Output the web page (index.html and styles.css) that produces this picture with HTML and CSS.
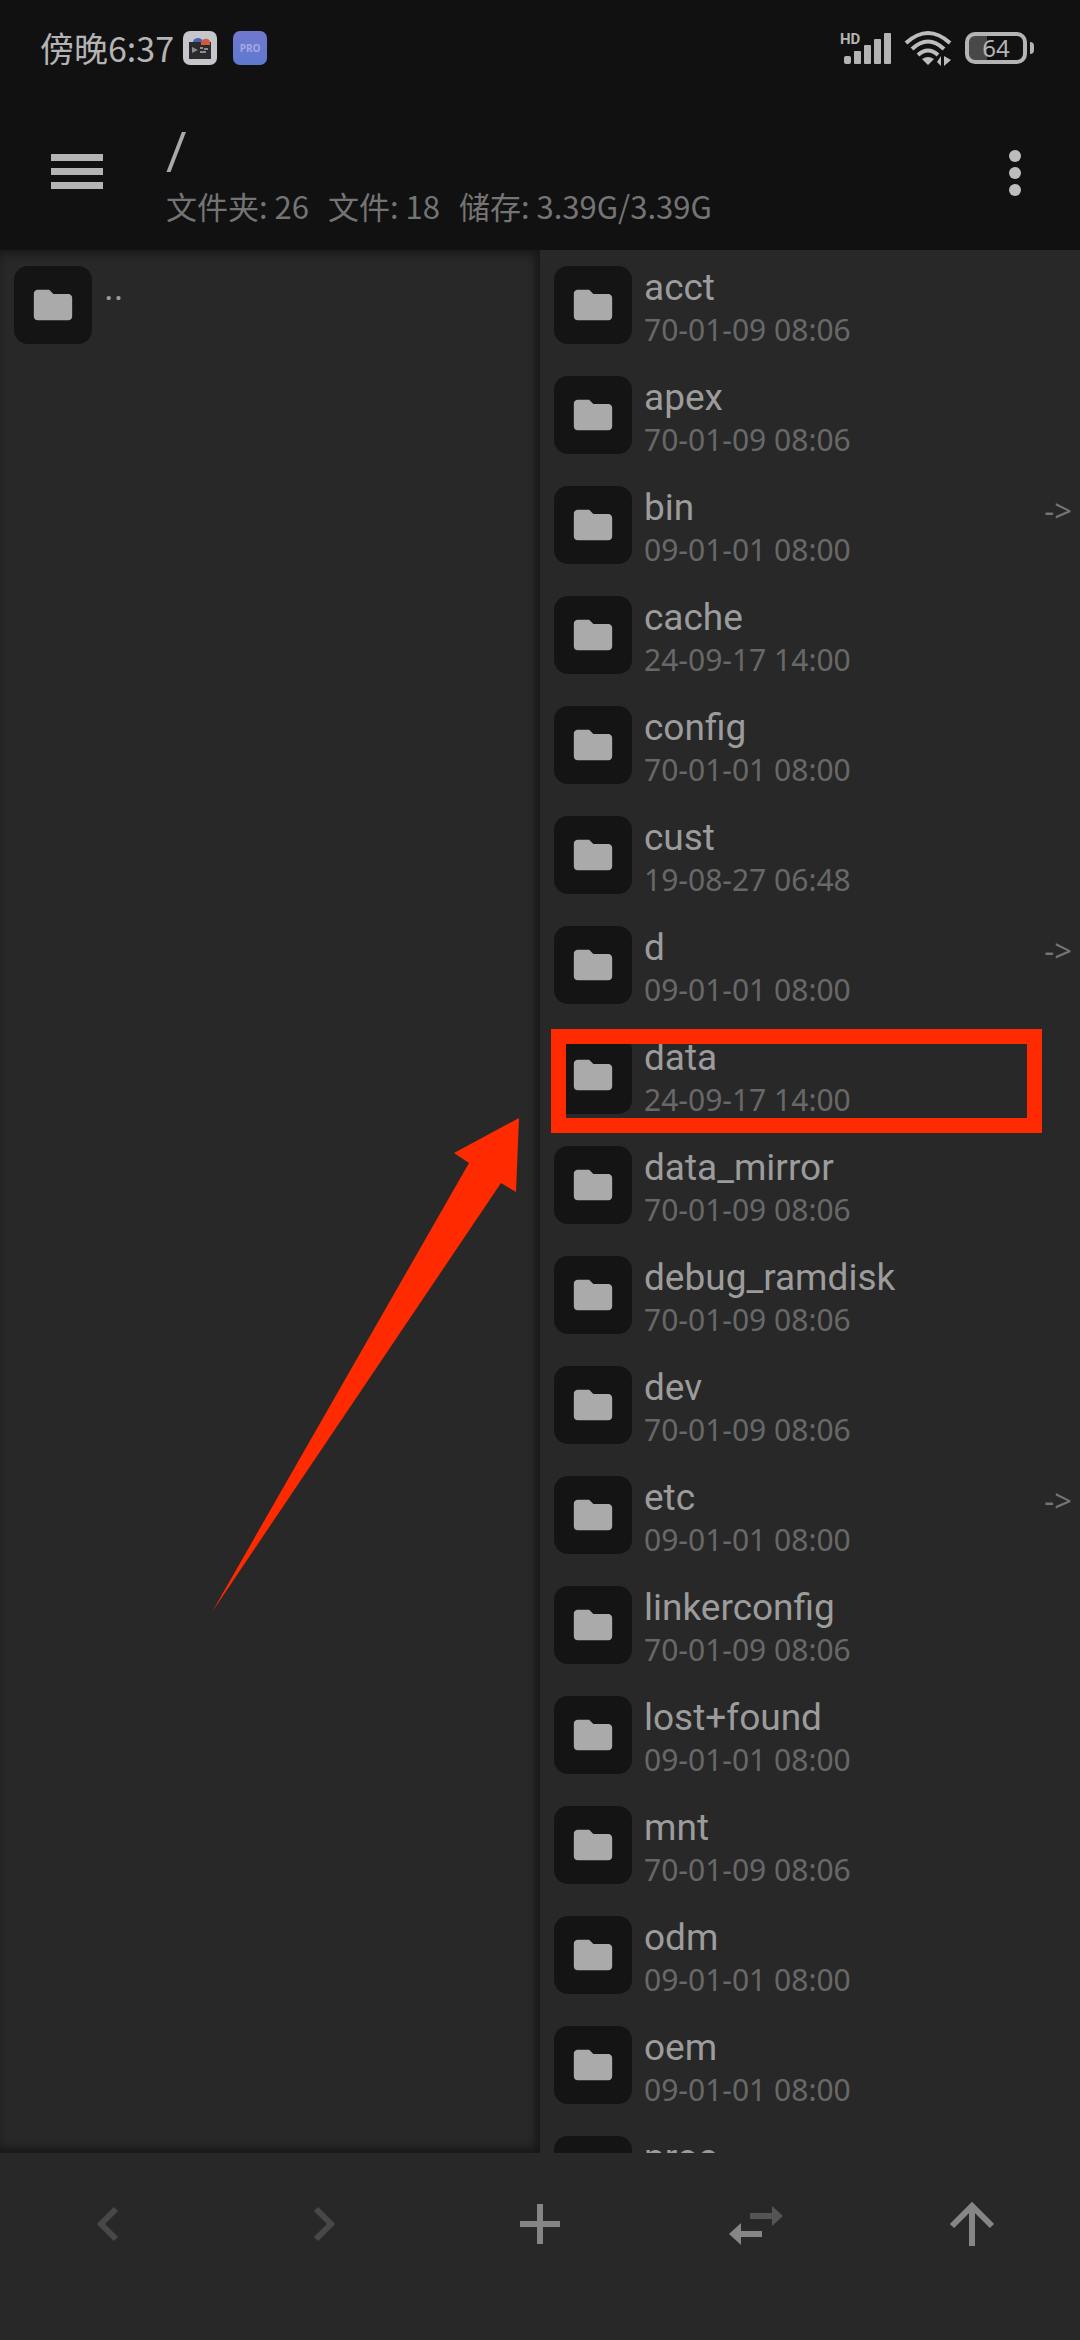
FILE: index.html
```html
<!DOCTYPE html>
<html lang="zh-CN">
<head>
<meta charset="utf-8">
<meta name="viewport" content="width=device-width, initial-scale=1">
<title>文件管理</title>
<link rel="stylesheet" href="styles.css">
</head>
<body>
<svg class="defs" aria-hidden="true">
  <symbol id="folder" viewBox="0 0 24 24"><path d="M10 4H4c-1.100 0-2 .9-2 2v12c0 1.100.9 2 2 2h16c1.100 0 2-.9 2-2V8.200c0-1.100-.9-2-2-2h-7.800z"/></symbol>
</svg>
<div class="app">
  <header class="header">
    <div class="status">
      <div class="status-side">
        <span class="clock">傍晚6:37</span>
        <svg class="notice" viewBox="0 0 34 34" aria-hidden="true">
          <rect width="34" height="34" rx="7" fill="#c4c6ca"/>
          <path d="M6 11h22v17H6z" fill="#2b2b2d"/>
          <path d="M10 11a5 4 0 0 1 10 0z" fill="#4a62b4"/>
          <path d="M18 14a5 5 0 0 1 9-4v4z" fill="#cf5a3c"/>
          <path d="M9 16l6 3-6 3zM17 16h3v2h-3zM21 17h4v2h-4zM17 20h6v2h-6z" fill="#8d8d8f"/>
        </svg>
        <span class="badge">PRO</span>
      </div>
      <div class="status-side">
        <svg class="signal" viewBox="0 0 56 36" aria-hidden="true">
          <text x="0" y="14" class="hd">HD</text>
          <rect x="4" y="26" width="7" height="8" rx="2"/><rect x="14" y="21" width="7" height="13" rx="1"/><rect x="24" y="15" width="7" height="19" rx="1"/><rect x="34" y="9" width="7" height="25" rx="1"/><rect x="44" y="3" width="7" height="31" rx="1"/>
        </svg>
        <svg class="wifi" viewBox="0 0 48 36" aria-hidden="true">
          <g fill="none" stroke="#bdbdbd" stroke-width="4"><path d="M2 13Q24-7 46 13"/><path d="M8 19Q24 4 40 19"/><path d="M14 25Q24 16 34 25"/></g>
          <path d="M18 29q6-4 12 0l-6 6zM37 26v10l-4-4zM40 26v10l7-6z"/>
        </svg>
        <span class="battery"><span class="level">64</span></span>
      </div>
    </div>
    <div class="bar">
      <button class="icon-btn" aria-label="菜单"><svg class="menu" viewBox="0 0 52 36"><path d="M0 0h52v7H0zM0 14h52v7H0zM0 28h52v7H0z"/></svg></button>
      <div class="heading">
        <h1>/</h1>
        <p><span>文件夹: 26</span><span>文件: 18</span><span>储存: 3.39G/3.39G</span></p>
      </div>
      <button class="icon-btn more-btn" aria-label="更多"><svg class="more" viewBox="0 0 12 46"><circle cx="6" cy="6" r="6"/><circle cx="6" cy="23" r="6"/><circle cx="6" cy="40" r="6"/></svg></button>
    </div>
  </header>
  <main class="panes">
    <section class="pane pane-left" aria-label="左侧窗口">
      <ul class="list">
        <li><button class="row"><span class="tile"><svg><use href="#folder"/></svg></span><span class="info"><span class="name">..</span></span></button></li>
      </ul>
      <svg class="pointer" viewBox="0 0 308 494" aria-hidden="true"><path d="M307 0L242 35l15 10L0 494 289 65l15 9z"/></svg>
    </section>
    <section class="pane pane-right" aria-label="右侧窗口">
      <ul class="list">
        <li><button class="row"><span class="tile"><svg><use href="#folder"/></svg></span><span class="info"><span class="name">acct</span><span class="date">70-01-09 08:06</span></span></button></li>
        <li><button class="row"><span class="tile"><svg><use href="#folder"/></svg></span><span class="info"><span class="name">apex</span><span class="date">70-01-09 08:06</span></span></button></li>
        <li><button class="row"><span class="tile"><svg><use href="#folder"/></svg></span><span class="info"><span class="name">bin</span><span class="date">09-01-01 08:00</span></span><span class="link">-&gt;</span></button></li>
        <li><button class="row"><span class="tile"><svg><use href="#folder"/></svg></span><span class="info"><span class="name">cache</span><span class="date">24-09-17 14:00</span></span></button></li>
        <li><button class="row"><span class="tile"><svg><use href="#folder"/></svg></span><span class="info"><span class="name">config</span><span class="date">70-01-01 08:00</span></span></button></li>
        <li><button class="row"><span class="tile"><svg><use href="#folder"/></svg></span><span class="info"><span class="name">cust</span><span class="date">19-08-27 06:48</span></span></button></li>
        <li><button class="row"><span class="tile"><svg><use href="#folder"/></svg></span><span class="info"><span class="name">d</span><span class="date">09-01-01 08:00</span></span><span class="link">-&gt;</span></button></li>
        <li class="marked"><button class="row"><span class="tile"><svg><use href="#folder"/></svg></span><span class="info"><span class="name">data</span><span class="date">24-09-17 14:00</span></span></button></li>
        <li><button class="row"><span class="tile"><svg><use href="#folder"/></svg></span><span class="info"><span class="name">data_mirror</span><span class="date">70-01-09 08:06</span></span></button></li>
        <li><button class="row"><span class="tile"><svg><use href="#folder"/></svg></span><span class="info"><span class="name">debug_ramdisk</span><span class="date">70-01-09 08:06</span></span></button></li>
        <li><button class="row"><span class="tile"><svg><use href="#folder"/></svg></span><span class="info"><span class="name">dev</span><span class="date">70-01-09 08:06</span></span></button></li>
        <li><button class="row"><span class="tile"><svg><use href="#folder"/></svg></span><span class="info"><span class="name">etc</span><span class="date">09-01-01 08:00</span></span><span class="link">-&gt;</span></button></li>
        <li><button class="row"><span class="tile"><svg><use href="#folder"/></svg></span><span class="info"><span class="name">linkerconfig</span><span class="date">70-01-09 08:06</span></span></button></li>
        <li><button class="row"><span class="tile"><svg><use href="#folder"/></svg></span><span class="info"><span class="name">lost+found</span><span class="date">09-01-01 08:00</span></span></button></li>
        <li><button class="row"><span class="tile"><svg><use href="#folder"/></svg></span><span class="info"><span class="name">mnt</span><span class="date">70-01-09 08:06</span></span></button></li>
        <li><button class="row"><span class="tile"><svg><use href="#folder"/></svg></span><span class="info"><span class="name">odm</span><span class="date">09-01-01 08:00</span></span></button></li>
        <li><button class="row"><span class="tile"><svg><use href="#folder"/></svg></span><span class="info"><span class="name">oem</span><span class="date">09-01-01 08:00</span></span></button></li>
        <li><button class="row"><span class="tile"><svg><use href="#folder"/></svg></span><span class="info"><span class="name">proc</span></span></button></li>
      </ul>
    </section>
  </main>
  <nav class="toolbar" aria-label="操作">
    <button aria-label="后退" disabled><svg viewBox="0 0 60 60"><path d="M38 15L23 30l15 15"/></svg></button>
    <button aria-label="前进" disabled><svg viewBox="0 0 60 60"><path d="M22 15l15 15-15 15"/></svg></button>
    <button aria-label="新建"><svg viewBox="0 0 60 60"><path d="M30 10v40M10 30h40"/></svg></button>
    <button aria-label="交换窗口"><svg viewBox="0 0 60 60"><path class="dim" d="M24 22h26"/><path class="dim-fill" d="M46 12l11 10-11 10z"/><path d="M11 40h25"/><path class="fill" d="M15 29v22L3 40z"/></svg></button>
    <button aria-label="上级目录"><svg viewBox="0 0 60 60"><path d="M30 52V11M10 32l20-20 20 20"/></svg></button>
  </nav>
</div>
</body>
</html>
```
FILE: styles.css
```css
* { box-sizing: border-box; }
body {
  margin: 0;
  background: #282828;
  color: #9c9c9c;
  font-family: "Noto Sans", "Noto Sans CJK SC", sans-serif;
}
button {
  border: 0;
  padding: 0;
  background: none;
  color: inherit;
  font: inherit;
}
svg { display: block; flex: none; }
.defs { display: none; }
.app { display: flex; flex-direction: column; height: 100vh; }

.header { flex: none; background: #111; }
.status {
  display: flex;
  justify-content: space-between;
  height: 96px;
  padding: 0 46px 0 40px;
}
.status-side { display: flex; align-items: center; }
.clock {
  color: #b4b4b4;
  font: 400 34px/96px "Noto Sans CJK SC", sans-serif;
}
.notice { width: 34px; height: 34px; margin: 0 16px 0 9px; }
.badge {
  width: 34px;
  border-radius: 7px;
  background: linear-gradient(#7277cf, #5c7ace);
  color: #a4a9e2;
  font: 700 10px/34px "Noto Sans", sans-serif;
  text-align: center;
}
.signal { width: 56px; height: 36px; margin-right: 8px; fill: #b4b4b4; overflow: visible; }
.hd { font: 700 15px Roboto, sans-serif; }
.wifi { width: 48px; height: 36px; margin-right: 13px; fill: #bdbdbd; }
.battery {
  display: flex;
  align-items: center;
}
.battery::after {
  content: "";
  width: 4px;
  height: 12px;
  margin-left: 3px;
  border-radius: 0 4px 4px 0;
  background: #b4b4b4;
}
.level {
  width: 62px;
  border: 4px solid #b4b4b4;
  border-radius: 10px;
  background: linear-gradient(90deg, #484848 34%, #111 34%);
  color: #b4b4b4;
  font: 400 24px/24px "Noto Sans", sans-serif;
  text-align: center;
}

.bar { display: flex; align-items: flex-start; height: 154px; padding-top: 34px; }
.icon-btn { display: flex; justify-content: center; width: 154px; padding-top: 24px; }
.menu { width: 52px; height: 36px; fill: #b4b4b4; }
.more-btn { width: 130px; padding-top: 20px; }
.more { width: 12px; height: 46px; fill: #bdbdbd; }
.heading { flex: 1; padding-left: 12px; }
.heading h1 { margin: 0; color: #aaa; font: 400 52px/44px Roboto, sans-serif; }
.heading p {
  display: flex;
  gap: 19px;
  margin: 12px 0 0;
  color: #747474;
  font: 400 31px/40px "Noto Sans CJK SC", sans-serif;
}

.panes { flex: 1; display: grid; grid-template-columns: 1fr 1fr; min-height: 0; }
.pane { position: relative; overflow: hidden; }
.pane-left { box-shadow: inset -8px 0 8px -4px #181818, inset 0 -8px 8px -4px #181818, inset 0 8px 8px -4px #1c1c1c; }
.list { margin: 0; padding: 0; list-style: none; }
.list li { position: relative; }
.row {
  display: flex;
  align-items: flex-start;
  gap: 12px;
  width: 100%;
  height: 110px;
  padding: 16px 8px 0 14px;
  text-align: left;
}
.tile {
  display: grid;
  place-items: center;
  flex: none;
  width: 78px;
  height: 78px;
  border-radius: 14px;
  background: #141414;
}
.tile svg { width: 46px; height: 46px; fill: #aaa; }
.info { flex: 1; display: flex; flex-direction: column; }
.name { font: 400 37px/44px Roboto, sans-serif; }
.date { color: #686868; font-size: 30px; line-height: 40px; }
.link { color: #747474; font-size: 31px; line-height: 48px; }
.marked::after {
  content: "";
  position: absolute;
  inset: 9px 38px -3px 11px;
  border: 15px solid #ff2a00;
}
.pointer {
  position: absolute;
  top: 868px;
  right: 20px;
  width: 308px;
  height: 494px;
  fill: #ff2a00;
}

.toolbar {
  flex: none;
  display: grid;
  grid-template-columns: repeat(5, 1fr);
  height: 187px;
  background: #282828;
}
.toolbar button { display: flex; justify-content: center; align-items: flex-start; padding-top: 41px; }
.toolbar svg { width: 60px; height: 60px; fill: none; stroke: #868686; stroke-width: 6; }
.toolbar button:disabled svg { stroke: #484848; }
.toolbar .dim { stroke: #545454; }
.toolbar .dim-fill { fill: #545454; stroke: none; }
.toolbar .fill { fill: #868686; stroke: none; }
```
